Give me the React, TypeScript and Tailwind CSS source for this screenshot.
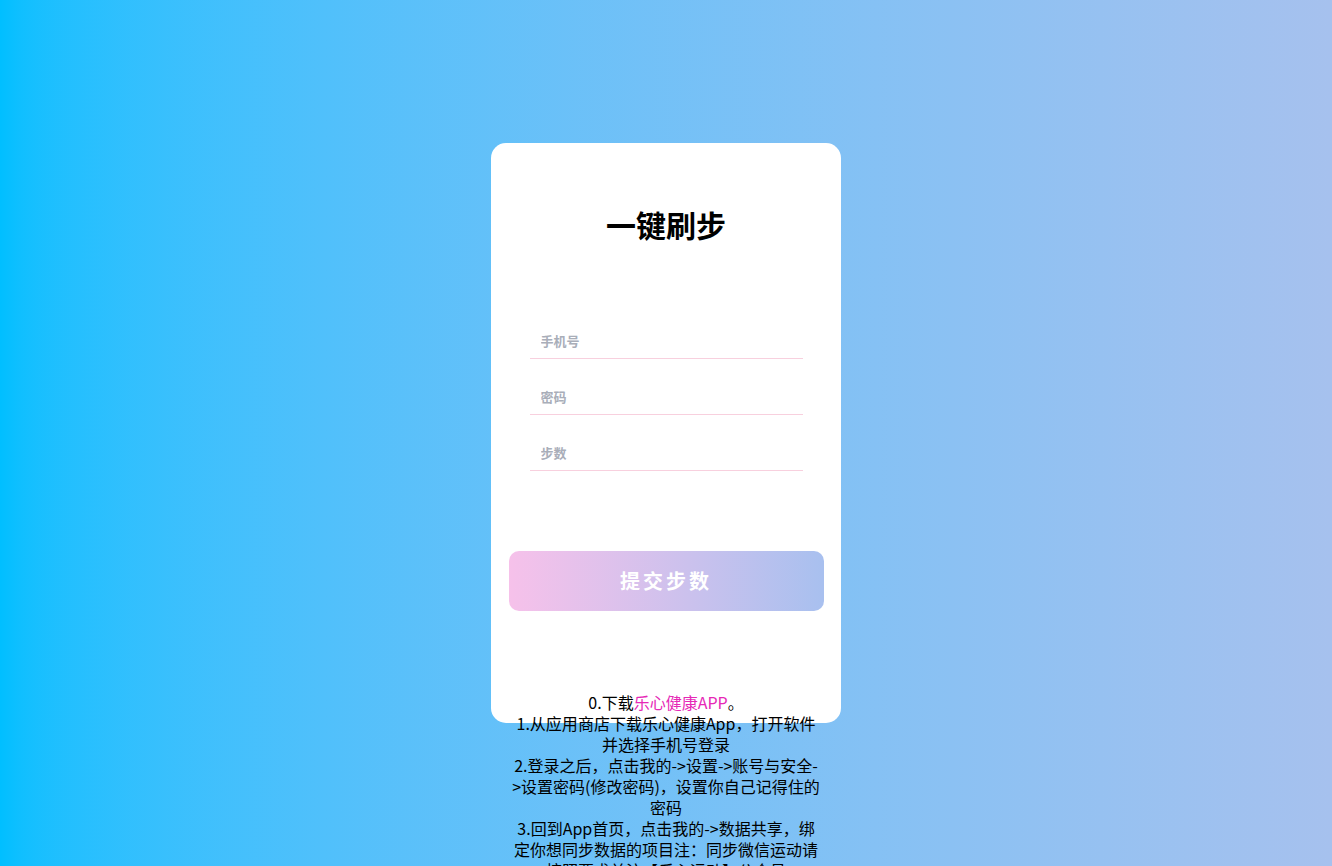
import React from "react";

const fields = [
  { name: "phone", placeholder: "手机号", type: "text" },
  { name: "password", placeholder: "密码", type: "password" },
  { name: "step", placeholder: "步数", type: "text" },
];

const lines = [
  "1.从应用商店下载乐心健康App，打开软件",
  "并选择手机号登录",
  "2.登录之后，点击我的->设置->账号与安全-",
  ">设置密码(修改密码)，设置你自己记得住的",
  "密码",
  "3.回到App首页，点击我的->数据共享，绑",
  "定你想同步数据的项目注：同步微信运动请",
  "按照要求关注【乐心运动】公众号",
];

function App() {
  return (
    <div
      className="min-h-screen w-full bg-gradient-to-r from-[#00bfff] to-[#a6c1ee] flex justify-center"
      style={{ fontFamily: '"Microsoft YaHei", "Noto Sans CJK SC", sans-serif' }}
    >
      <div className="mt-[143px] w-[350px] h-[580px] shrink-0 bg-white rounded-[15px] flex flex-col items-center">
        <h1 className="shrink-0 mt-[62px] text-[30px] leading-[38px] font-bold text-black">
          一键刷步
        </h1>

        <div className="shrink-0 mt-[79px] flex flex-col gap-[19px]">
          {fields.map((f) => (
            <input
              key={f.name}
              name={f.name}
              type={f.type}
              placeholder={f.placeholder}
              className="w-[273px] h-[37px] pl-[11px] border-b border-[#f8d0de] text-[13px] font-semibold outline-none placeholder:text-[#a9aeb9]"
            />
          ))}
        </div>

        <button className="shrink-0 mt-[80px] w-[315px] h-[60px] rounded-[10px] bg-gradient-to-r from-[#f6c1ea] to-[#a8c0ef] text-white text-[20px] font-bold tracking-[3px]">
          提交步数
        </button>

        <div className="shrink-0 mt-[81px] w-[315px] text-center text-[16px] leading-[21px] text-black whitespace-nowrap">
          <p>
            0.下载<a href="#" className="text-[#e628b6]">乐心健康APP</a>。
          </p>
          {lines.map((l) => (
            <p key={l}>{l}</p>
          ))}
        </div>
      </div>
    </div>
  );
}

export default App;
